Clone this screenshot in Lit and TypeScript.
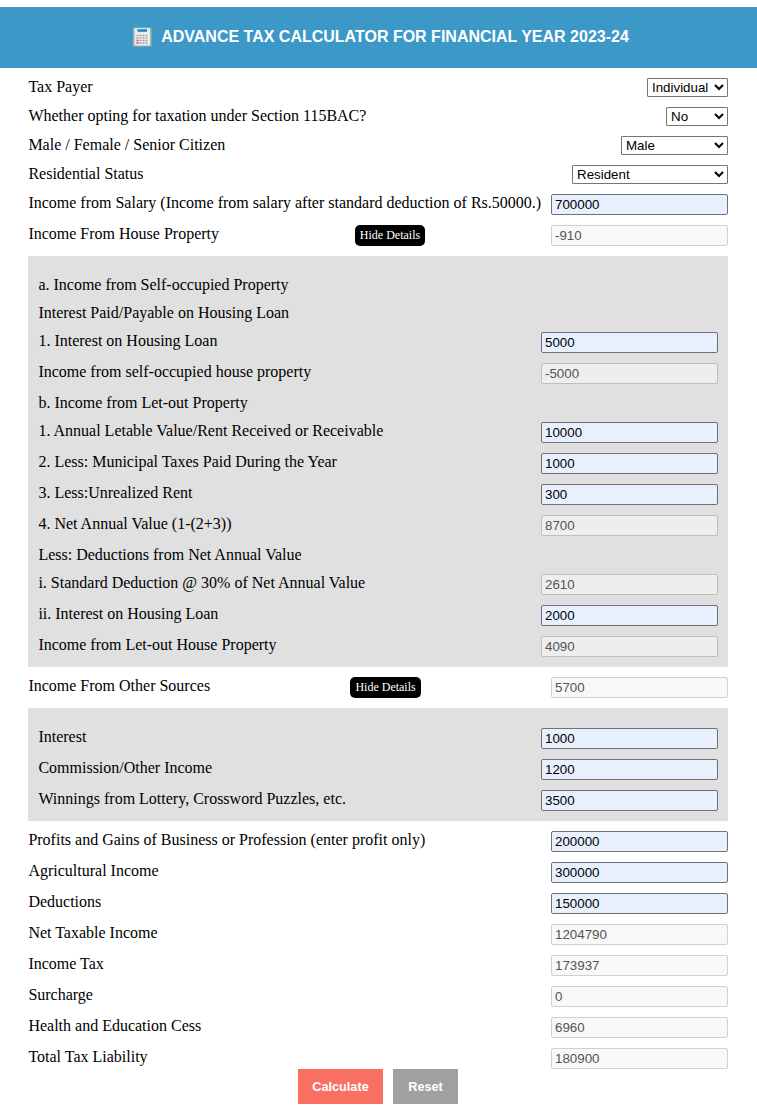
import { LitElement, html, css, nothing } from "lit";
import { customElement, property } from "lit/decorators.js";
import { classMap } from "lit/directives/class-map.js";

type Row = {
  label: string;
  value?: string;
  disabled?: boolean;
  select?: string;
  size?: string;
  toggle?: boolean;
};

const profile: Row[] = [
  { label: "Tax Payer", select: "Individual", size: "w81" },
  { label: "Whether opting for taxation under Section 115BAC?", select: "No", size: "w62" },
  { label: "Male / Female / Senior Citizen", select: "Male", size: "w107" },
  { label: "Residential Status", select: "Resident", size: "w156" },
  { label: "Income from Salary (Income from salary after standard deduction of Rs.50000.)", value: "700000" },
  { label: "Income From House Property", value: "-910", disabled: true, toggle: true },
];

const house: Row[] = [
  { label: "a. Income from Self-occupied Property" },
  { label: "Interest Paid/Payable on Housing Loan" },
  { label: "1. Interest on Housing Loan", value: "5000" },
  { label: "Income from self-occupied house property", value: "-5000", disabled: true },
  { label: "b. Income from Let-out Property" },
  { label: "1. Annual Letable Value/Rent Received or Receivable", value: "10000" },
  { label: "2. Less: Municipal Taxes Paid During the Year", value: "1000" },
  { label: "3. Less:Unrealized Rent", value: "300" },
  { label: "4. Net Annual Value (1-(2+3))", value: "8700", disabled: true },
  { label: "Less: Deductions from Net Annual Value" },
  { label: "i. Standard Deduction @ 30% of Net Annual Value", value: "2610", disabled: true },
  { label: "ii. Interest on Housing Loan", value: "2000" },
  { label: "Income from Let-out House Property", value: "4090", disabled: true },
];

const sources: Row[] = [
  { label: "Income From Other Sources", value: "5700", disabled: true, toggle: true },
];

const other: Row[] = [
  { label: "Interest", value: "1000" },
  { label: "Commission/Other Income", value: "1200" },
  { label: "Winnings from Lottery, Crossword Puzzles, etc.", value: "3500" },
];

const totals: Row[] = [
  { label: "Profits and Gains of Business or Profession (enter profit only)", value: "200000" },
  { label: "Agricultural Income", value: "300000" },
  { label: "Deductions", value: "150000" },
  { label: "Net Taxable Income", value: "1204790", disabled: true },
  { label: "Income Tax", value: "173937", disabled: true },
  { label: "Surcharge", value: "0", disabled: true },
  { label: "Health and Education Cess", value: "6960", disabled: true },
  { label: "Total Tax Liability", value: "180900", disabled: true },
];

@customElement("form-row")
class FormRow extends LitElement {
  @property({ attribute: false }) row!: Row;
  @property({ type: Boolean }) inset = false;

  static styles = css`
    :host {
      display: flex;
      justify-content: space-between;
      align-items: flex-start;
      font: 16px/18px "Liberation Serif", "Times New Roman", serif;
      color: #000;
    }
    .label { white-space: nowrap; padding-left: 0.4px; }
    .toggle {
      box-sizing: border-box;
      height: 21px;
      margin: 0 0 0 10px;
      padding: 0 5px 1px;
      border: 0;
      border-radius: 5px;
      background: #000;
      color: #fff;
      font: 12px/18px "Liberation Serif", "Times New Roman", serif;
    }
    .field, .select {
      box-sizing: border-box;
      margin: 0;
      font: 13.333px "Liberation Sans", Arial, sans-serif;
      border: 1px solid #767676;
      border-radius: 2px;
      color: #000;
    }
    .field {
      width: 177px;
      height: 21px;
      padding: 1px 3px;
      background: #e8f0fe;
      border-color: #6d717a;
    }
    .field.off { background: #f8f8f8; border-color: #d0d0d0; color: #545454; }
    .field.off.inset { background: #eeeeee; border-color: #bfbfbf; }
    .select { height: 19px; padding: 0; background: #fff; border-radius: 1px; }
    .w81 { width: 81px; }
    .w62 { width: 62px; }
    .w107 { width: 107px; }
    .w156 { width: 156px; }
  `;

  render() {
    const r = this.row;
    return html`
      <span class="label">${r.label}</span>
      ${r.toggle ? html`<button class="toggle">Hide Details</button>` : nothing}
      ${r.select
        ? html`<select class="select ${r.size}"><option>${r.select}</option></select>`
        : nothing}
      ${r.value !== undefined
        ? html`<input
            class=${classMap({ field: true, off: !!r.disabled, inset: this.inset })}
            .value=${r.value}
            ?disabled=${r.disabled}
          />`
        : nothing}
    `;
  }
}

@customElement("app-root")
class AppRoot extends LitElement {
  static styles = css`
    :host { display: block; padding-top: 7px; background: #fff; }
    .header {
      display: flex;
      align-items: center;
      justify-content: center;
      gap: 9px;
      box-sizing: border-box;
      height: 61px;
      padding: 0 0 1px 5px;
      background: #3c99c7;
      color: #fff;
    }
    .title {
      margin: 0;
      font: bold 16px/20px "Liberation Sans", Arial, sans-serif;
      text-transform: uppercase;
      white-space: nowrap;
      padding-bottom: 1px;
    }
    .icon { display: block; width: 19px; height: 20px; }
    .form {
      display: flex;
      flex-direction: column;
      gap: 10px;
      padding: 10px 29px 0 28px;
    }
    .panel {
      display: flex;
      flex-direction: column;
      gap: 10px;
      padding: 20px 10px 10px;
      background: #e0e0e0;
    }
    .actions { display: flex; justify-content: center; gap: 10px; padding-right: 1px; }
    .btn {
      box-sizing: border-box;
      height: 35px;
      padding: 0;
      border: 0;
      color: #fff;
      font: bold 12.7px "Liberation Sans", Arial, sans-serif;
    }
    .calc { width: 85px; background: #f97063; }
    .reset { width: 65px; background: #9fa1a0; }
  `;

  rows(list: Row[], inset = false) {
    return list.map((r) => html`<form-row .row=${r} ?inset=${inset}></form-row>`);
  }

  render() {
    return html`
      <header class="header">
        <svg class="icon" viewBox="0 0 19 20">
          <rect x="0" y="0.5" width="18.5" height="19" rx="0.6" fill="#a5b3a5" />
          <rect x="1.5" y="1.2" width="15.5" height="17.3" fill="#e8ecea" />
          <rect x="4.5" y="2" width="9.5" height="2.8" fill="#1684d6" />
          <rect x="4.5" y="2" width="9.5" height="0.8" fill="#55aee5" />
          <rect x="3.3" y="7" width="12.2" height="10.2" fill="#f5f5f5" />
          <g stroke="#989da0" stroke-width="1.4" stroke-dasharray="2 1">
            <path d="M3.5 8.5H15.5M3.5 11H15.5M3.5 13.5H15.5M3.5 16H15.5" />
          </g>
          <path d="M3.5 12.8h2v1.4h-2zM3.5 15.3h2v1.4h-2z" fill="#e85a68" />
        </svg>
        <h1 class="title">Advance Tax Calculator for Financial Year 2023-24</h1>
      </header>
      <main class="form">
        ${this.rows(profile)}
        <section class="panel">${this.rows(house, true)}</section>
        ${this.rows(sources)}
        <section class="panel">${this.rows(other, true)}</section>
        ${this.rows(totals)}
      </main>
      <div class="actions">
        <button class="btn calc">Calculate</button>
        <button class="btn reset">Reset</button>
      </div>
    `;
  }
}
